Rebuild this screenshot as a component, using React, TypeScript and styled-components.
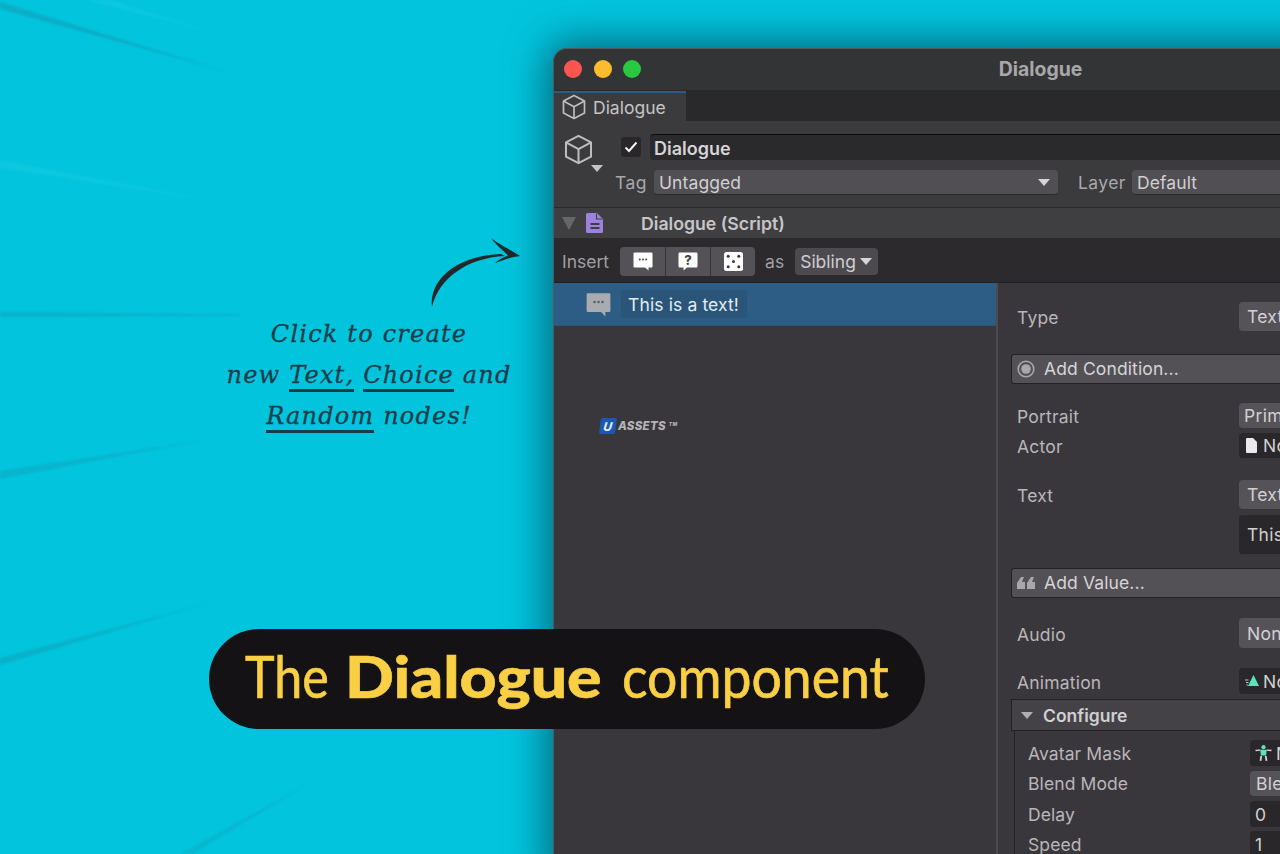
import React from "react";
import styled, { createGlobalStyle } from "styled-components";

const Global = createGlobalStyle`
  html, body { margin: 0; padding: 0; background: #02c5dd; }
  #root { width: 1280px; height: 854px; overflow: hidden; }
  * { box-sizing: border-box; }
`;

const Stage = styled.div`
  position: relative;
  width: 1280px;
  height: 854px;
  overflow: hidden;
  background: #02c5dd;
  font-family: Inter, "Liberation Sans", sans-serif;
`;
const Streaks = styled.svg`
  position: absolute;
  left: 0;
  top: 0;
  width: 560px;
  height: 854px;
  filter: blur(1.2px);
`;
const Arrow = styled.svg`
  position: absolute;
  left: 425px;
  top: 232px;
  width: 100px;
  height: 80px;
`;
const Note = styled.div`
  position: absolute;
  left: 200px;
  top: 314px;
  width: 338px;
  text-align: center;
  font-family: "DejaVu Serif", serif;
  font-style: italic;
  font-size: 24px;
  line-height: 41px;
  letter-spacing: 1.2px;
  color: #173d4b;
  -webkit-text-stroke: 0.3px #173d4b;
`;
const NoteLine = styled.div`
  white-space: nowrap;
`;
const Mark = styled.span`
  border-bottom: 3px solid #173d4b;
  display: inline-block;
  line-height: 28px;
`;

const Win = styled.section`
  position: absolute;
  left: 553px;
  top: 48px;
  width: 974px;
  height: 830px;
  display: flex;
  flex-direction: column;
  background: #3a373c;
  border-radius: 14px 14px 0 0;
  border: 1px solid #55585a;
  border-bottom: 0;
  border-right: 0;
  box-shadow: 0 0 40px 6px rgba(0, 40, 60, 0.6);
  overflow: hidden;
  color: #c3c0c4;
  font-size: 17.5px;
`;
const TitleBar = styled.header`
  height: 41px;
  flex: none;
  display: flex;
  align-items: center;
  position: relative;
  justify-content: center;
  padding-bottom: 2px;
  background: #333436;
  font-weight: 700;
  font-size: 19.4px;
  color: #a8a8a9;
`;
const Lights = styled.div`
  position: absolute;
  left: 10px;
  top: 11px;
  display: flex;
  gap: 11.5px;
`;
const Light = styled.i<{ $c: string }>`
  width: 18px;
  height: 18px;
  border-radius: 50%;
  background: ${(p) => p.$c};
`;
const TabBar = styled.div`
  height: 31px;
  flex: none;
  display: flex;
  align-items: flex-end;
  background: #29292b;
`;
const Tab = styled.div`
  width: 132px;
  height: 30px;
  display: flex;
  align-items: center;
  gap: 6px;
  padding-left: 7px;
  background: #3b3b3d;
  border-top: 2px solid #2c5a82;
  color: #c4c4c5;
`;
const Head = styled.div`
  height: 87px;
  flex: none;
  background: #3b3b3d;
  border-bottom: 1px solid #2b2a2d;
  position: relative;
  padding: 13px 0 0 0;
`;
const HeadTop = styled.div`
  display: flex;
  height: 26px;
  padding-left: 96px;
`;
const CubeSlot = styled.div`
  position: absolute;
  left: 9px;
  top: 13px;
`;
const Caret = styled.i`
  position: absolute;
  left: 28px;
  top: 31px;
  width: 0;
  height: 0;
  border-left: 6px solid transparent;
  border-right: 6px solid transparent;
  border-top: 7px solid #c4c4c4;
`;
const Check = styled.div`
  position: absolute;
  left: 67px;
  top: 16px;
  width: 20px;
  height: 20px;
  border-radius: 3px;
  background: #29272a;
  display: flex;
  align-items: center;
  justify-content: center;
`;
const NameField = styled.div`
  flex: 1;
  height: 26px;
  background: #2a292c;
  border-top: 1px solid #0c0c0d;
  border-radius: 4px 0 0 4px;
  padding-left: 4px;
  font-weight: 600;
  font-size: 18px;
  line-height: 27px;
  color: #d5d4d6;
`;
const TagRow = styled.div`
  display: flex;
  align-items: center;
  height: 25px;
  margin-top: 10px;
  padding-left: 61px;
`;
const TagLabel = styled.span<{ $w: number; $ml?: number }>`
  width: ${(p) => p.$w}px;
  margin-left: ${(p) => p.$ml ?? 0}px;
  flex: none;
  color: #a9a8ab;
  letter-spacing: 0.4px;
`;
const Select = styled.div<{ $w?: number }>`
  ${(p) => (p.$w ? `width:${p.$w}px; flex:none;` : "flex:1;")}
  height: 25px;
  background: #514f53;
  border-bottom: 1px solid #2c2a2d;
  border-radius: 4px;
  padding-left: 5px;
  line-height: 25px;
  color: #d0cfd1;
  position: relative;
  letter-spacing: 0.1px;
`;
const Tri = styled.i<{ $c?: string }>`
  display: inline-block;
  width: 0;
  height: 0;
  border-left: 6px solid transparent;
  border-right: 6px solid transparent;
  border-top: 7px solid ${(p) => p.$c ?? "#d5d5d5"};
`;
const SelectTri = styled(Tri)`
  position: absolute;
  right: 8px;
  top: 9px;
`;
const ScriptRow = styled.div`
  height: 30px;
  flex: none;
  display: flex;
  align-items: center;
  padding-left: 8px;
  background: #3f3f41;
  font-weight: 600;
  color: #c6c5c7;
`;
const ScriptTri = styled.i`
  width: 0;
  height: 0;
  border-left: 7px solid transparent;
  border-right: 7px solid transparent;
  border-top: 13px solid #666867;
  margin-right: 10px;
`;
const ScriptName = styled.span`
  margin-left: 37px;
  font-size: 17.7px;
`;
const Tools = styled.div`
  height: 45px;
  flex: none;
  display: flex;
  align-items: center;
  padding: 2px 0 0 8px;
  background: #2c2a2d;
  border-bottom: 1px solid #1f1e20;
  color: #a19fa3;
`;
const ToolGroup = styled.div`
  display: flex;
  height: 29px;
  margin-left: 11px;
  background: #545256;
  border-radius: 4px;
  overflow: hidden;
`;
const ToolBtn = styled.button`
  width: 45px;
  height: 29px;
  padding: 0;
  border: 0;
  background: transparent;
  border-left: 1px solid #353337;
  display: flex;
  align-items: center;
  justify-content: center;
  &:first-child { border-left: 0; }
`;
const AsLabel = styled.span`
  margin: 0 11px 0 10px;
`;
const Sibling = styled.div`
  width: 83px;
  height: 27px;
  background: #4c4a4e;
  border-radius: 4px;
  display: flex;
  align-items: center;
  gap: 4px;
  padding-left: 5px;
  color: #cfced0;
`;
const Body = styled.div`
  flex: 1;
  display: flex;
  min-height: 0;
`;
const Tree = styled.div`
  width: 444px;
  flex: none;
  position: relative;
  background: #3a373c;
  border-right: 2px solid #4d4b4f;
`;
const TreeRow = styled.div`
  height: 43px;
  display: flex;
  align-items: center;
  padding-left: 32px;
  background: #2d5c85;
  border-bottom: 1px solid #2b5577;
`;
const TreeText = styled.span`
  margin-left: 10px;
  height: 28px;
  padding: 1px 8px 0 7px;
  line-height: 27px;
  background: #2a5579;
  border-radius: 3px;
  color: #e4ebf2;
  letter-spacing: 0.12px;
`;
const Logo = styled.div`
  position: absolute;
  left: 46px;
  top: 135px;
  display: flex;
  align-items: center;
  gap: 2px;
  font-style: italic;
  font-weight: 800;
  font-size: 11.5px;
  letter-spacing: 0.25px;
  color: #b4b4b6;
`;
const LogoBadge = styled.span`
  width: 16px;
  height: 16px;
  display: flex;
  align-items: center;
  justify-content: center;
  background: #1e58ae;
  border-radius: 2px;
  transform: skewX(-8deg);
  color: #dfe8f5;
  font-size: 12px;
`;
const Tm = styled.sup`
  font-size: 5px;
  margin-left: 1px;
  position: relative;
  top: -2px;
`;
const Inspector = styled.div`
  flex: 1;
  padding-left: 13px;
  display: flex;
  flex-direction: column;
  background: #3a373c;
`;
const PropRow = styled.div<{ $mt: number; $h: number }>`
  display: grid;
  grid-template-columns: 222px 1fr;
  flex: none;
  margin-top: ${(p) => p.$mt}px;
  height: ${(p) => p.$h}px;
  padding-left: 6px;
`;
const SubRow = styled(PropRow)`
  padding-left: 13px;
`;
const Label = styled.span`
  align-self: center;
  padding-top: 2px;
  color: #b9b6ba;
  letter-spacing: 0.2px;
`;
const SubLabel = styled(Label)`
  padding-top: 0;
  letter-spacing: 0.1px;
`;
const Field = styled.div<{ $dark?: boolean; $pl?: number; $gap?: number }>`
  display: flex;
  align-items: center;
  gap: ${(p) => p.$gap ?? 6}px;
  padding-left: ${(p) => p.$pl ?? 7}px;
  background: ${(p) => (p.$dark ? "#29272a" : "#565358")};
  border-radius: 4px;
  color: #d2d0d3;
  letter-spacing: 0.3px;
`;
const ActionBtn = styled.div<{ $mt: number }>`
  flex: none;
  height: 30px;
  margin-top: ${(p) => p.$mt}px;
  display: flex;
  align-items: center;
  gap: 9px;
  padding: 0 0 1px 5px;
  background: #545156;
  border: 1px solid #232124;
  border-right: 0;
  border-radius: 3px;
  color: #d6d4d7;
  letter-spacing: 0.12px;
`;
const Fold = styled.div`
  flex: none;
  height: 32px;
  margin-top: 5px;
  display: flex;
  align-items: center;
  gap: 10px;
  padding-left: 9px;
  background: #454247;
  border: 1px solid #232124;
  border-right: 0;
  font-weight: 600;
  color: #d0cfd1;
`;
const FoldBody = styled.div`
  margin-left: 3px;
  padding-top: 9px;
  border-left: 1px solid #242225;
  display: flex;
  flex-direction: column;
`;
const Pill = styled.div`
  position: absolute;
  left: 209px;
  top: 629px;
  width: 716px;
  height: 100px;
  border-radius: 50px;
  background: #141214;
  color: #f9cf45;
  display: flex;
  align-items: center;
  padding: 0 0 7px 36px;
  font-family: Lato, sans-serif;
  font-size: 58px;
  white-space: nowrap;
`;
const PillPart = styled.span<{ $w: number; $sx: number; $bold?: boolean }>`
  display: inline-block;
  flex: none;
  width: ${(p) => p.$w}px;
  font-weight: ${(p) => (p.$bold ? 900 : 400)};
  -webkit-text-stroke: ${(p) => (p.$bold ? 0.6 : 0.7)}px #f9cf45;
  transform: scaleX(${(p) => p.$sx});
  transform-origin: left center;
`;

const Cube = ({ s = 26, c = "#bdbdbe" }: { s?: number; c?: string }) => (
  <svg width={s} height={s} viewBox="0 0 26 26" fill="none" stroke={c} strokeWidth="1.7" strokeLinejoin="round">
    <path d="M13 1.5 23.5 7v12L13 24.5 2.5 19V7z" />
    <path d="M2.5 7 13 12.7 23.5 7M13 12.7v11.8" />
  </svg>
);
const Bubble = ({ c = "#fff", dot = "#444" }: { c?: string; dot?: string }) => (
  <svg width="20" height="20" viewBox="0 0 20 20">
    <path d="M1.5 1.5h17a1 1 0 0 1 1 1v13a1 1 0 0 1-1 1h-3v3l-3.4-3H1.5a1 1 0 0 1-1-1v-13a1 1 0 0 1 1-1z" fill={c} />
    <circle cx="6.8" cy="8.4" r="1" fill={dot} />
    <circle cx="10" cy="8.4" r="1" fill={dot} />
    <circle cx="13.2" cy="8.4" r="1" fill={dot} />
  </svg>
);
const Ask = () => (
  <svg width="20" height="20" viewBox="0 0 20 20">
    <path d="M1.5 1.5h17a1 1 0 0 1 1 1v13a1 1 0 0 1-1 1H9l-3.4 3v-3H1.500a1 1 0 0 1-1-1v-13a1 1 0 0 1 1-1z" fill="#fff" />
    <text x="10" y="14" textAnchor="middle" fontSize="13" fontWeight="800" fontFamily="Inter" fill="#444">?</text>
  </svg>
);
const Dice = () => (
  <svg width="19" height="19" viewBox="0 0 19 19">
    <rect width="19" height="19" rx="2.5" fill="#fff" />
    {[[4.2, 4.2], [14.8, 4.2], [9.5, 9.5], [4.2, 14.8], [14.8, 14.8]].map(([x, y]) => (
      <circle key={`${x}-${y}`} cx={x} cy={y} r="1.5" fill="#3a383c" />
    ))}
  </svg>
);
const DocPurple = () => (
  <svg width="18" height="20" viewBox="0 0 18 20">
    <path d="M1.500 0H11l6 6v12.500a1.500 1.500 0 0 1-1.500 1.500h-14A1.500 1.500 0 0 1 0 18.500v-17A1.500 1.500 0 0 1 1.500 0z" fill="#9a82de" />
    <path d="M10.500 .5v5.500H16.500" fill="none" stroke="#3f3f41" strokeWidth="1.100" />
    <path d="M4.500 11h9M4.500 15h9" stroke="#3f3f41" strokeWidth="1.800" />
  </svg>
);
const Ring = () => (
  <svg width="18" height="18" viewBox="0 0 18 18">
    <circle cx="9" cy="9" r="7.800" fill="none" stroke="#a9a7aa" strokeWidth="1.600" />
    <circle cx="9" cy="9" r="4.800" fill="#a9a7aa" />
  </svg>
);
const Quote = () => (
  <svg width="18" height="14" viewBox="0 0 18 14" fill="#a9a7aa">
    <path d="M4 1h3L5 6h3v7H0V7zM14 1h3l-2 5h3v7h-8V7z" />
  </svg>
);
const PageGlyph = () => (
  <svg width="11" height="15" viewBox="0 0 11 15">
    <path d="M0 1a1 1 0 0 1 1-1h6l4 4v10a1 1 0 0 1-1 1H1a1 1 0 0 1-1-1z" fill="#ebe9ec" />
  </svg>
);
const AnimGlyph = () => (
  <svg width="14" height="12" viewBox="0 0 14 12">
    <path d="M8.500 0 14 11H3z" fill="#5fe3bf" />
    <path d="M0 5h3.500M1 7.500h2.500M1.500 10H3" stroke="#b8c8c3" strokeWidth="1" />
  </svg>
);
const AvatarGlyph = () => (
  <svg width="17" height="16" viewBox="0 0 17 16">
    <circle cx="8.500" cy="2.200" r="2.100" fill="#5fe3bf" />
    <path d="M5.300 4.800h6.400l-.6 5.700H5.900z" fill="#5fe3bf" />
    <path d="M.5 5.500 5.300 5.200M16.500 5.500 11.700 5.200" stroke="#d5d5d5" strokeWidth="1.300" />
    <path d="M6.300 11 5.500 15.800M10.700 11l.8 4.800" stroke="#d5d5d5" strokeWidth="1.800" />
  </svg>
);
const Tick = () => (
  <svg width="14" height="12" viewBox="0 0 14 12" fill="none" stroke="#f2f2f2" strokeWidth="2">
    <path d="M1.500 6.500 5 10l7.500-8.500" />
  </svg>
);

const streaks: [string, string, number][] = [
  ["M0 2 L228 72 L0 9Z", "#0fa3bd", 0.7],
  ["M0 312 L240 314 L240 316 L0 317Z", "#0fa3bd", 0.55],
  ["M0 471 L205 440 L0 479Z", "#0fa3bd", 0.5],
  ["M0 658 L205 604 L0 665Z", "#0fa3bd", 0.6],
  ["M180 854 L310 783 L192 854Z", "#0fa3bd", 0.45],
  ["M0 160 L214 201 L0 168Z", "#35d4e6", 0.2],
  ["M86 0 L216 33 L110 0Z", "#35d4e6", 0.2],
];

const App = () => (
  <Stage>
    <Global />
    <Streaks viewBox="0 0 560 854">
      {streaks.map(([d, c, o]) => (
        <path key={d} d={d} fill={c} opacity={o} />
      ))}
    </Streaks>
    <Win>
      <TitleBar>
        <Lights>
          <Light $c="#fb5550" />
          <Light $c="#fdbb2e" />
          <Light $c="#28c840" />
        </Lights>
        Dialogue
      </TitleBar>
      <TabBar>
        <Tab>
          <Cube />
          Dialogue
        </Tab>
      </TabBar>
      <Head>
        <CubeSlot>
          <Cube s={31} />
          <Caret />
        </CubeSlot>
        <Check>
          <Tick />
        </Check>
        <HeadTop>
          <NameField>Dialogue</NameField>
        </HeadTop>
        <TagRow>
          <TagLabel $w={39}>Tag</TagLabel>
          <Select $w={404}>
            Untagged
            <SelectTri />
          </Select>
          <TagLabel $w={54} $ml={20}>Layer</TagLabel>
          <Select>Default</Select>
        </TagRow>
      </Head>
      <ScriptRow>
        <ScriptTri />
        <DocPurple />
        <ScriptName>Dialogue (Script)</ScriptName>
      </ScriptRow>
      <Tools>
        Insert
        <ToolGroup>
          <ToolBtn><Bubble /></ToolBtn>
          <ToolBtn><Ask /></ToolBtn>
          <ToolBtn><Dice /></ToolBtn>
        </ToolGroup>
        <AsLabel>as</AsLabel>
        <Sibling>
          Sibling
          <Tri />
        </Sibling>
      </Tools>
      <Body>
        <Tree>
          <TreeRow>
            <svg width="25" height="25" viewBox="0 0 20 20">
              <path d="M1.500 1h17a1 1 0 0 1 1 1v13a1 1 0 0 1-1 1h-3v3.500l-3.400-3.500H1.500a1 1 0 0 1-1-1V2a1 1 0 0 1 1-1z" fill="#a9abb0" />
              <circle cx="6.800" cy="8" r="1" fill="#4a5c70" />
              <circle cx="10" cy="8" r="1" fill="#4a5c70" />
              <circle cx="13.200" cy="8" r="1" fill="#4a5c70" />
            </svg>
            <TreeText>This is a text!</TreeText>
          </TreeRow>
          <Logo>
            <LogoBadge>U</LogoBadge>
            ASSETS
            <Tm>TM</Tm>
          </Logo>
        </Tree>
        <Inspector>
          <PropRow $mt={19} $h={29}>
            <Label>Type</Label>
            <Field $pl={8}>Text</Field>
          </PropRow>
          <ActionBtn $mt={23}>
            <Ring />
            Add Condition...
          </ActionBtn>
          <PropRow $mt={19} $h={25}>
            <Label>Portrait</Label>
            <Field $pl={5}>Primary</Field>
          </PropRow>
          <PropRow $mt={5} $h={25}>
            <Label>Actor</Label>
            <Field $dark>
              <PageGlyph />
              None
            </Field>
          </PropRow>
          <PropRow $mt={22} $h={29}>
            <Label>Text</Label>
            <Field $pl={8}>Text</Field>
          </PropRow>
          <PropRow $mt={6} $h={39}>
            <span />
            <Field $dark $pl={8}>This is a text!</Field>
          </PropRow>
          <ActionBtn $mt={14}>
            <Quote />
            Add Value...
          </ActionBtn>
          <PropRow $mt={20} $h={30}>
            <Label>Audio</Label>
            <Field $pl={8}>None</Field>
          </PropRow>
          <PropRow $mt={20} $h={26}>
            <Label>Animation</Label>
            <Field $dark $pl={6} $gap={4}>
              <AnimGlyph />
              None
            </Field>
          </PropRow>
          <Fold>
            <Tri $c="#b0aeb1" />
            Configure
          </Fold>
          <FoldBody>
            <SubRow $mt={0} $h={26}>
              <SubLabel>Avatar Mask</SubLabel>
              <Field $dark $pl={5} $gap={4}>
                <AvatarGlyph />
                None
              </Field>
            </SubRow>
            <SubRow $mt={5} $h={25}>
              <SubLabel>Blend Mode</SubLabel>
              <Field $pl={6}>Blend</Field>
            </SubRow>
            <SubRow $mt={5} $h={26}>
              <SubLabel>Delay</SubLabel>
              <Field $dark $pl={5}>0</Field>
            </SubRow>
            <SubRow $mt={4} $h={26}>
              <SubLabel>Speed</SubLabel>
              <Field $dark $pl={5}>1</Field>
            </SubRow>
          </FoldBody>
        </Inspector>
      </Body>
    </Win>
    <Arrow viewBox="0 0 100 80">
      <path d="M7 75C4 50 28 24 76 22 L80 24C42 26 14 46 7 75Z" fill="#20282c" />
      <path d="M66 6C72 11 84 17 95 24C85 25 76 29 70 31C76 26 80 25 83 23.500C78 18 70 12 66 6Z" fill="#20282c" />
    </Arrow>
    <Note>
      <NoteLine>Click to create</NoteLine>
      <NoteLine>new <Mark>Text,</Mark> <Mark>Choice</Mark> and</NoteLine>
      <NoteLine><Mark>Random</Mark> nodes!</NoteLine>
    </Note>
    <Pill>
      <PillPart $w={100} $sx={0.865}>The</PillPart>
      <PillPart $w={277} $sx={1.11} $bold>Dialogue</PillPart>
      <PillPart $w={270} $sx={0.923}>component</PillPart>
    </Pill>
  </Stage>
);

export default App;
